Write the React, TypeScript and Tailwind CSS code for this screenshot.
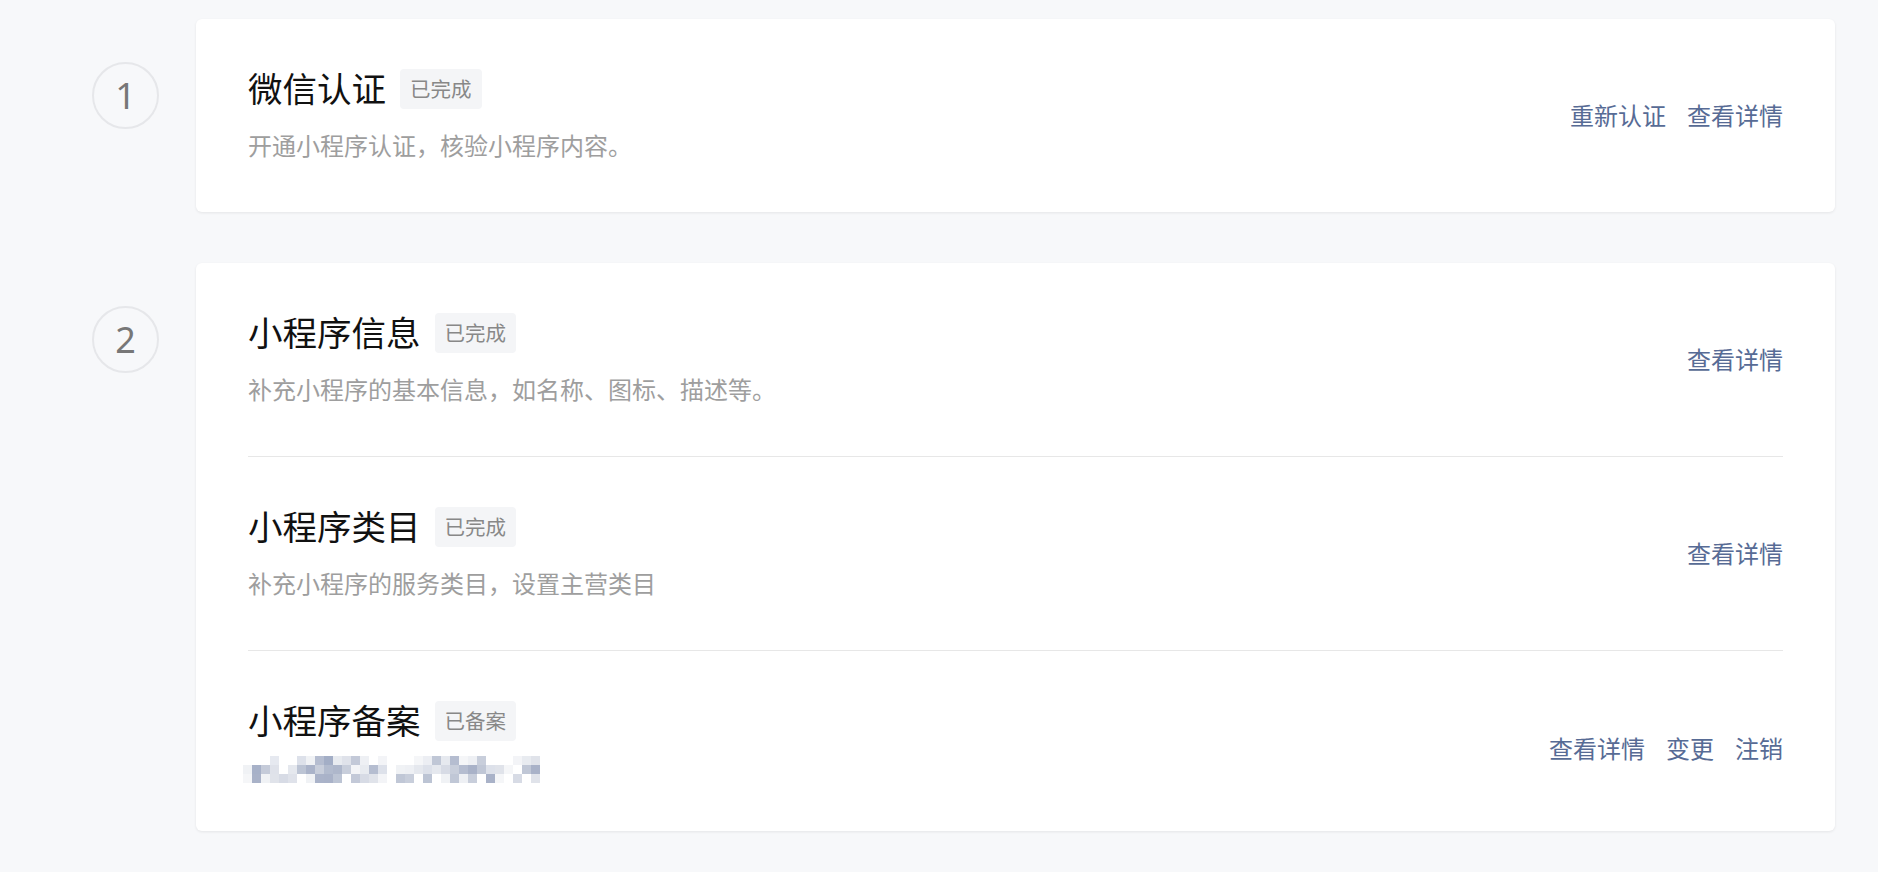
import React from "react";

type Row = {
  title: string;
  badge: string;
  desc?: string;
  mosaic?: boolean;
  actions: string[];
};

const steps: { no: number; rows: Row[] }[] = [
  {
    no: 1,
    rows: [
      {
        title: "微信认证",
        badge: "已完成",
        desc: "开通小程序认证，核验小程序内容。",
        actions: ["重新认证", "查看详情"],
      },
    ],
  },
  {
    no: 2,
    rows: [
      {
        title: "小程序信息",
        badge: "已完成",
        desc: "补充小程序的基本信息，如名称、图标、描述等。",
        actions: ["查看详情"],
      },
      {
        title: "小程序类目",
        badge: "已完成",
        desc: "补充小程序的服务类目，设置主营类目",
        actions: ["查看详情"],
      },
      {
        title: "小程序备案",
        badge: "已备案",
        mosaic: true,
        actions: ["查看详情", "变更", "注销"],
      },
    ],
  },
];

// pixelated (masked) filing number
const mosaicRows = [
  "fff fff fff e6e9f0 fff fff dde1ea f0f2f5 b5bdd0 a3aec6 e8ebf0 dfe2ea c3c9d8 eef0f4 fff f3f4f7 fff fff fff f5f6f8 eceef3 c0c7d6 e6e9ef b5bdd0 f5f6f8 eef0f4 c8cedb fff fff fff f3f4f7 e8ebf0 e0e3ea",
  "f0f2f5 a7b1c8 c5cbd9 dfe2ea fff e5e8ee bcc4d4 aab3c9 c8cedb b2bbce aeb7cb c8cedb f3f4f7 e8ebf0 b5bdd0 dde1ea fff f0f2f5 eef0f4 e5e8ee dde1ea e5e8ee d7dbe5 c8cedb b5bdd0 a9b2c8 c0c7d6 dde1ea e0e3ea f5f6f8 fff c0c7d6 a9b2c8",
  "f5f6f8 a9b2c8 f0f2f5 e0e3ea d7dbe5 dfe2ea fff f0f2f5 aab3c9 a9b2c8 bcc4d4 fff c3c9d8 d7dbe5 e0e3ea f3f4f7 fff c0c7d6 c8cedb fff bcc4d4 fff f0f2f5 c0c7d6 eef0f4 c8cedb fff a9b2c8 f5f6f8 fff d7dbe5 fff e0e3ea",
].map((r) => r.split(" "));

const Mosaic = () => (
  <svg width="297" height="27" viewBox="0 0 297 27" className="-ml-[5px] mt-[13px] block">
    {mosaicRows.map((row, y) =>
      row.map((c, x) => (
        <rect key={`${x}-${y}`} x={x * 9} y={y * 9} width="9" height="9" fill={`#${c}`} />
      ))
    )}
  </svg>
);

const StepRow = ({ row, last }: { row: Row; last: boolean }) => (
  <div className={`flex items-center justify-between py-[48px] ${last ? "" : "border-b border-[#e7e7e7]"}`}>
    <div>
      <div className="flex items-center gap-[14px]">
        <span className="text-[34.5px] leading-[44px] text-[#111]">{row.title}</span>
        <span className="flex h-[40px] items-center rounded-[4px] bg-[#f4f5f7] px-[10px] text-[20.5px] text-[#888]">
          {row.badge}
        </span>
      </div>
      {row.desc && (
        <div className="mt-[17px] text-[24px] leading-[36px] text-[#9e9e9e]">{row.desc}</div>
      )}
      {row.mosaic && <Mosaic />}
    </div>
    <div className={`flex gap-[21px] text-[24px] text-[#576b95] ${row.mosaic ? "mt-[16px]" : ""}`}>
      {row.actions.map((a) => (
        <a key={a} href="#" className="leading-[36px]">
          {a}
        </a>
      ))}
    </div>
  </div>
);

export default function App() {
  return (
    <div
      className="min-h-screen bg-[#f7f8fa] pt-[19px] pr-[43px] pl-[92px]"
      style={{ fontFamily: '"Noto Sans", "Noto Sans CJK SC", sans-serif' }}
    >
      <div className="flex flex-col gap-[51px]">
        {steps.map((s) => (
          <div key={s.no} className="flex items-start gap-[37px]">
            <div className="mt-[43px] flex h-[67px] w-[67px] shrink-0 items-center justify-center rounded-full border-2 border-[#e6e7ea] text-[36px] font-normal text-[#777]">
              {s.no}
            </div>
            <div className="flex-1 rounded-md bg-white px-[52px] shadow-[0_1px_3px_rgba(0,0,0,0.08)]">
              {s.rows.map((r, i) => (
                <StepRow key={r.title} row={r} last={i === s.rows.length - 1} />
              ))}
            </div>
          </div>
        ))}
      </div>
    </div>
  );
}
